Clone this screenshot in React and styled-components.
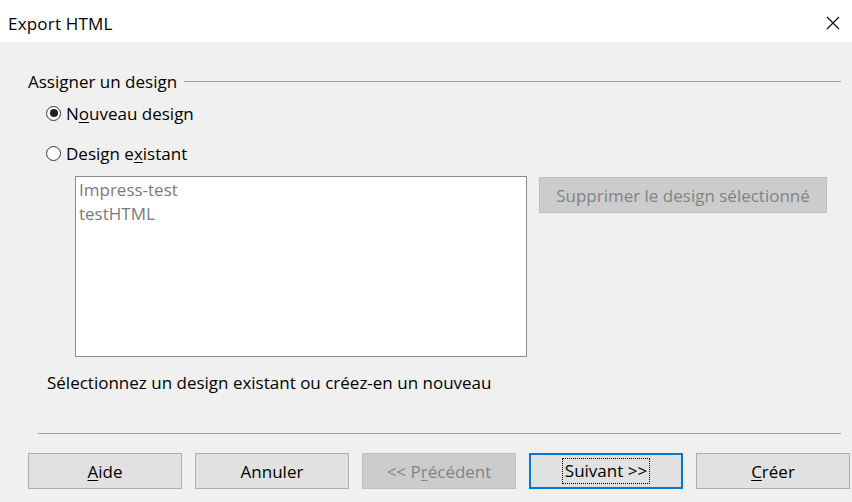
import React, { useState } from 'react';
import styled, { createGlobalStyle } from 'styled-components';

const GlobalStyle = createGlobalStyle`
  html, body {
    margin: 0;
    padding: 0;
    background: #f0f0f0;
  }
  body {
    font-family: "Open Sans", "Noto Sans", "Liberation Sans", sans-serif;
    font-size: 17px;
    color: #000;
  }
`;

const Dialog = styled.div`
  width: 852px;
  height: 502px;
  display: flex;
  flex-direction: column;
  background: #f0f0f0;
  overflow: hidden;
`;

const TitleBar = styled.div`
  height: 42px;
  flex: none;
  background: #fff;
  display: flex;
  align-items: center;
  justify-content: space-between;
  padding: 4px 0 0 8px;
  box-sizing: border-box;
`;

const Title = styled.span`
  font-size: 17px;
  letter-spacing: 0.2px;
`;

const CloseButton = styled.button`
  width: 26px;
  height: 24px;
  border: none;
  background: transparent;
  padding: 0;
  display: flex;
  align-items: center;
  justify-content: flex-start;
`;

const Body = styled.div`
  flex: 1;
  display: flex;
  flex-direction: column;
  padding: 28px 11px 0 28px;
`;

const GroupHeader = styled.div`
  display: flex;
  align-items: center;
  gap: 7px;
  height: 22px;

  &::after {
    content: '';
    flex: 1;
    height: 1px;
    background: #a0a0a0;
  }
`;

const Options = styled.div`
  display: flex;
  flex-direction: column;
  gap: 18px;
  padding: 10px 0 0 18px;
`;

const RadioRow = styled.label`
  display: flex;
  align-items: center;
  gap: 5px;
  height: 22px;
`;

const RadioCircle = styled.span`
  width: 15px;
  height: 15px;
  box-sizing: border-box;
  border-radius: 50%;
  border: 1px solid #333;
  background: #fff;
  display: flex;
  align-items: center;
  justify-content: center;

  &::after {
    content: '';
    width: 8px;
    height: 8px;
    border-radius: 50%;
    background: ${(p) => (p.$checked ? '#222' : 'transparent')};
  }
`;

const Underlined = styled.span`
  text-decoration: underline;
  text-underline-offset: 2px;
`;

const DesignRow = styled.div`
  display: flex;
  align-items: flex-start;
  gap: 12px;
  padding: 12px 0 0 47px;
`;

const ListBox = styled.ul`
  list-style: none;
  margin: 0;
  padding: 1px 3px 0;
  width: 452px;
  height: 181px;
  box-sizing: border-box;
  background: #fff;
  border: 1px solid #8c8c8c;
  color: #7a7a7a;
`;

const ListItem = styled.li`
  line-height: 24px;
`;

const Button = styled.button`
  height: 36px;
  box-sizing: border-box;
  font-family: inherit;
  font-size: 17px;
  background: ${(p) => (p.disabled ? '#cccccc' : '#e1e1e1')};
  color: ${(p) => (p.disabled ? '#838383' : '#000')};
  border: ${(p) => (p.$default ? '2px solid #0078d7' : p.disabled ? '1px solid #bfbfbf' : '1px solid #adadad')};
  padding: 0;
  display: flex;
  align-items: center;
  justify-content: center;
`;

const RemoveButton = styled(Button)`
  width: 288px;
  margin-top: 1px;
`;

const Hint = styled.p`
  margin: 14px 0 0 19px;
`;

const Separator = styled.hr`
  margin: auto 0 0 10px;
  border: none;
  height: 1px;
  background: #a0a0a0;
`;

const ButtonBar = styled.div`
  display: flex;
  gap: 13px;
  padding: 19px 0 13px 28px;
`;

const BarButton = styled(Button)`
  width: 154px;
`;

const FocusRing = styled.span`
  outline: 1px dotted #000;
  padding: 0 2px;
  line-height: 24px;
`;

function CloseIcon() {
  return (
    <svg width="14" height="14" viewBox="0 0 14 14">
      <path d="M1 1 L13 13 M13 1 L1 13" stroke="#000" strokeWidth="1.1" fill="none" />
    </svg>
  );
}

export default function App() {
  const [design, setDesign] = useState('new');
  const designs = ['Impress-test', 'testHTML'];

  return (
    <>
      <GlobalStyle />
      <Dialog>
        <TitleBar>
          <Title>Export HTML</Title>
          <CloseButton aria-label="Fermer">
            <CloseIcon />
          </CloseButton>
        </TitleBar>
        <Body>
          <GroupHeader>
            <span>Assigner un design</span>
          </GroupHeader>
          <Options>
            <RadioRow onClick={() => setDesign('new')}>
              <RadioCircle $checked={design === 'new'} />
              <span>N<Underlined>o</Underlined>uveau design</span>
            </RadioRow>
            <RadioRow onClick={() => setDesign('existing')}>
              <RadioCircle $checked={design === 'existing'} />
              <span>Design e<Underlined>x</Underlined>istant</span>
            </RadioRow>
          </Options>
          <DesignRow>
            <ListBox>
              {designs.map((name) => (
                <ListItem key={name}>{name}</ListItem>
              ))}
            </ListBox>
            <RemoveButton disabled>Supprimer le design sélectionné</RemoveButton>
          </DesignRow>
          <Hint>Sélectionnez un design existant ou créez-en un nouveau</Hint>
          <Separator />
        </Body>
        <ButtonBar>
          <BarButton><span><Underlined>A</Underlined>ide</span></BarButton>
          <BarButton>Annuler</BarButton>
          <BarButton disabled><span>&lt;&lt; P<Underlined>r</Underlined>écédent</span></BarButton>
          <BarButton $default><FocusRing>Suivant &gt;&gt;</FocusRing></BarButton>
          <BarButton><span><Underlined>C</Underlined>réer</span></BarButton>
        </ButtonBar>
      </Dialog>
    </>
  );
}
